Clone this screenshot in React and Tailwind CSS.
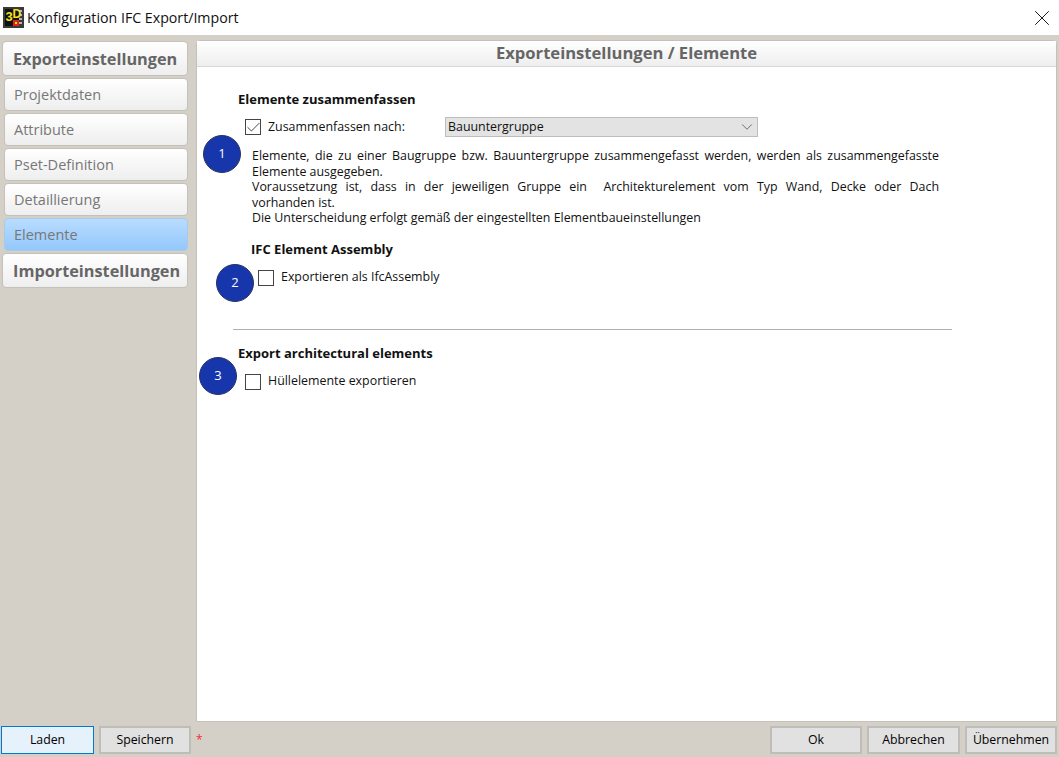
import { X, ChevronDown, Check } from 'lucide-react';

const ui = "font-['Open_Sans','Liberation_Sans',sans-serif]";

const navItems = [
  { label: 'Exporteinstellungen', head: true },
  { label: 'Projektdaten' },
  { label: 'Attribute' },
  { label: 'Pset-Definition' },
  { label: 'Detaillierung' },
  { label: 'Elemente', active: true },
  { label: 'Importeinstellungen', head: true },
];

function NavItem({ label, head, active }) {
  if (head) {
    return (
      <div className="h-[35px] pt-px pl-[10px] flex items-center rounded-[4px] border border-[#c4c1ba] bg-gradient-to-b from-white to-[#eeeeee] text-[16.3px] font-bold text-[#666666] whitespace-nowrap">
        {label}
      </div>
    );
  }
  return (
    <div
      className={
        'h-[33px] ml-[2px] pt-px pl-[9px] flex items-center rounded-[4px] border text-[14.5px] text-[#777777] ' +
        (active
          ? 'border-[#a9c9e6] bg-gradient-to-b from-[#b9dcff] to-[#93c8fb]'
          : 'border-[#c4c1ba] bg-gradient-to-b from-white to-[#eeeeee]')
      }
    >
      {label}
    </div>
  );
}

function Badge({ n, className }) {
  return (
    <div className={'absolute w-[38px] h-[38px] rounded-full bg-[#1736ab] border border-[#28345f] text-white text-[13px] flex items-center justify-center ' + className}>
      {n}
    </div>
  );
}

function CheckBox({ checked }) {
  return (
    <div className="w-4 h-4 border border-[#444444] bg-white flex items-center justify-center shrink-0">
      {checked && <Check size={17} strokeWidth={1.25} className="shrink-0 text-[#333333]" />}
    </div>
  );
}

function Btn({ children, width, focus }) {
  return (
    <button
      className={
        'h-7 text-[12.3px] text-black flex items-center justify-center ' + width + ' ' +
        (focus ? 'bg-[#e5f1fb] border-[1.5px] border-[#0078d7]' : 'bg-[#e1e1e1] border-2 border-[#bfbdb8]')
      }
    >
      {children}
    </button>
  );
}

export default function App() {
  return (
    <div className={'w-[1059px] h-[757px] flex flex-col overflow-hidden bg-[#d4d0c8] text-black ' + ui}>
      {/* title bar */}
      <div className="h-[35px] shrink-0 bg-white flex items-center pl-[3px] pr-[4px]">
        <svg width="21" height="21" viewBox="0 0 21 21" className="shrink-0">
          <rect width="21" height="21" fill="#3a3a3a" />
          <rect x="2" y="2" width="14" height="17" fill="#111111" />
          <rect x="16" y="3" width="3" height="2" fill="#b5b5b5" />
          <rect x="16" y="7" width="3" height="2" fill="#b5b5b5" />
          <rect x="16" y="11" width="3" height="2" fill="#b5b5b5" />
          <rect x="16" y="15" width="3" height="2" fill="#b5b5b5" />
          <text x="2.5" y="14" fontSize="13" fontWeight="700" fill="#f4e01c" fontFamily="Liberation Sans, sans-serif">3</text>
          <text x="9.5" y="11" fontSize="12" fontWeight="700" fill="#f4e01c" fontFamily="Liberation Sans, sans-serif">D</text>
          <rect x="10" y="13" width="6" height="6" fill="#e2231a" />
          <rect x="12" y="15" width="2" height="2" fill="#f4e01c" />
        </svg>
        <span className="ml-[3px] text-[14.2px] text-[#111111]">Konfiguration IFC Export/Import</span>
        <X size={26} strokeWidth={0.9} className="ml-auto text-[#111111]" />
      </div>

      {/* body */}
      <div className="flex-1 flex min-h-0 pt-[5px] pr-[2px]">
        <div className="w-[186px] ml-[2px] pt-px shrink-0 flex flex-col gap-[2px]">
          {navItems.map((item) => (
            <NavItem key={item.label} {...item} />
          ))}
        </div>

        <div className="ml-[8px] flex-1 flex flex-col bg-white border border-[#c4c1ba] rounded-t-[4px]">
          <div className="h-[26px] shrink-0 border-b border-[#d8d8d8] bg-gradient-to-b from-white to-[#eeeeee] flex items-center justify-center text-[16.6px] font-bold text-[#666666]">
            Exporteinstellungen / Elemente
          </div>

          <div className="relative flex-1 pl-[41px] pt-[24px] text-[12.4px] text-[#111111]">
            <Badge n="1" className="left-[6px] top-[68px]" />
            <Badge n="2" className="left-[19px] top-[197px]" />
            <Badge n="3" className="left-[2px] top-[290px]" />

            <div className="font-bold text-[13px] leading-4">Elemente zusammenfassen</div>
            <div className="flex items-center mt-[10px] ml-[7px] h-5">
              <CheckBox checked />
              <span className="ml-[7px] w-[177px]">Zusammenfassen nach:</span>
              <div className="w-[313px] h-5 border border-[#bdbdbd] bg-[#e3e3e3] pl-[2px] pr-px flex items-center justify-between">
                <span>Bauuntergruppe</span>
                <ChevronDown size={18} strokeWidth={1.1} className="text-[#555555]" />
              </div>
            </div>

            <div className="w-[687px] ml-[14px] mt-[11px] leading-[15.5px]">
              <p className="text-justify">
                Elemente, die zu einer Baugruppe bzw. Bauuntergruppe zusammengefasst werden, werden als zusammengefasste Elemente ausgegeben.
              </p>
              <p className="[text-align-last:justify]">
                Voraussetzung ist, dass in der jeweiligen Gruppe ein&nbsp; Architekturelement vom Typ Wand, Decke oder Dach
              </p>
              <p>vorhanden ist.</p>
              <p>Die Unterscheidung erfolgt gemäß der eingestellten Elementbaueinstellungen</p>
            </div>

            <div className="ml-[13px] mt-[15px] font-bold text-[13px] leading-4">IFC Element Assembly</div>
            <div className="flex items-center ml-[20px] mt-[13px] h-4">
              <CheckBox />
              <span className="ml-[7px]">Exportieren als IfcAssembly</span>
            </div>

            <div className="w-[719px] -ml-[5px] mt-[43px] h-px bg-[#b0b0b0]" />

            <div className="mt-[15px] font-bold text-[13px] leading-4">Export architectural elements</div>
            <div className="flex items-center ml-[7px] mt-[13px] h-4">
              <CheckBox />
              <span className="ml-[7px]">Hüllelemente exportieren</span>
            </div>
          </div>
        </div>
      </div>

      {/* footer */}
      <div className="h-[35px] shrink-0 flex items-start pt-[4px] pl-[1px] pr-[2px]">
        <Btn width="w-[93px]" focus>Laden</Btn>
        <div className="ml-[5px]"><Btn width="w-[92px]">Speichern</Btn></div>
        <span className="ml-[5px] mt-[6px] text-[12px] leading-4 text-[#f03030]">*</span>
        <div className="ml-auto flex gap-[5px]">
          <Btn width="w-[92px]">Ok</Btn>
          <Btn width="w-[93px]">Abbrechen</Btn>
          <Btn width="w-[92px]">Übernehmen</Btn>
        </div>
      </div>
    </div>
  );
}
